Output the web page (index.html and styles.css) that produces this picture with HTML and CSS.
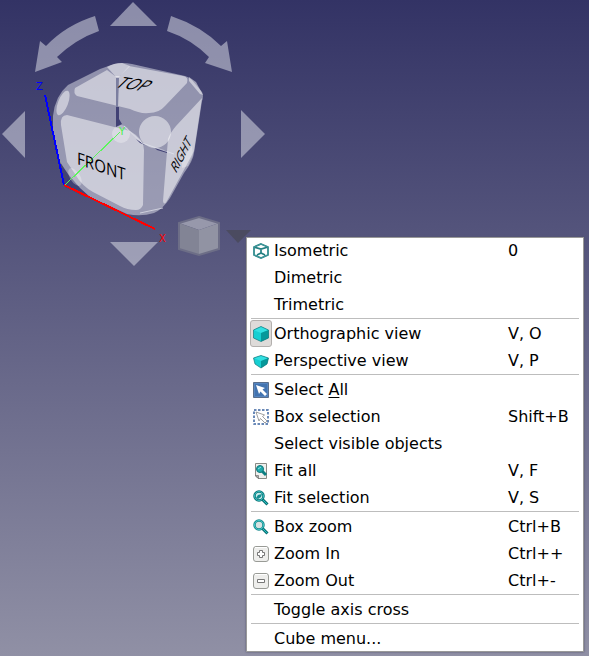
FILE: index.html
```html
<!DOCTYPE html>
<html lang="en">
<head>
<meta charset="utf-8">
<title>3D view</title>
<link rel="stylesheet" href="styles.css">
</head>
<body>
<main class="viewport">
  <svg class="navcube" width="272" height="272" viewBox="0 0 272 272" role="img" aria-label="Navigation cube">
    <g class="arrow">
      <path d="M133 2L157 26H110Z"/>
      <path d="M2 134L25 111V158Z"/>
      <path d="M265 134L241 110V158Z"/>
      <path d="M110 242H158L134 266Z"/>
      <path d="M95 16L99 31Q76 39 57 57L62 62L35 72L40 41L46 46Q66 25 95 16Z"/>
      <path d="M171 16L167 31Q191 39 209 57L205 63L232 72L227 41L221 46Q201 26 171 16Z"/>
    </g>
    <path class="body" d="M68 85L100 69Q111 65 114 64Q122 62 132 64L185 76Q189 77 192 80L202 92Q204 96 202 101L194 153Q193 161 184 173L170 198Q163 209 154 213Q141 217 127 214L90 197Q80 191 72 182L60 164L53 130V116Q55 96 68 85Z"/>
    <path class="gap" d="M60 162L68 174L80 188L90 197L84 196L65 187Z"/>
    <g class="face">
      <path d="M75 88L107 70L115 76H120L129 66L183 76Q189 77 187 83L165 106Q159 113 149 113Q140 114 130 109L77 96Q73 93 75 88Z"/>
      <path d="M67 115L130 131Q144 139 144 150L143 205Q141 210 136 210Q127 210 120 206L93 192Q82 186 75 174L67 162L61 125Q60 115 67 115Z"/>
      <path d="M202 98L194 151L185 168L168 199Q164 207 163 201L168 139Q170 133 176 126Z"/>
      <circle cx="155" cy="132" r="16"/>
      <ellipse cx="63" cy="103" rx="5" ry="13" transform="rotate(21 63 103)"/>
      <path d="M107 67Q114 63 122 63L130 66L119 77H116Z"/>
      <path d="M189 77L196 82L203 95L200 94L189 81Z"/>
      <path class="faint" d="M182 159L192 146L193 155L188 166L182 168Z"/>
      <ellipse class="faint" cx="75" cy="177" rx="5" ry="10" transform="rotate(-32 75 177)"/>
      <ellipse class="faint" cx="121" cy="134" rx="9" ry="9"/>
    </g>
    <path class="seam" d="M116 78H119L118 108H116Z"/>
    <path class="gap" d="M116 107H119V119L122 124L116 127V119Z"/>
    <path class="gap" d="M136 139L145 145L140 143ZM155 148L167 151V153L157 150Z"/>
    <path class="thread" d="M124 126L142 143L174 154M140 213L163 208"/>
    <path class="axis-y" d="M65 185L120 132"/>
    <path class="axis-z" d="M45 95L64 185"/>
    <path class="axis-x" d="M64 185L155 229"/>
    <text class="label-z" x="36" y="90">Z</text>
    <text class="label-y" x="119" y="135">Y</text>
    <text class="label-x" x="159" y="242">X</text>
    <text class="side front" transform="translate(77 164) rotate(19) skewX(19)">FRONT</text>
    <text class="side top" transform="translate(114 87) rotate(8) skewX(-38)">TOP</text>
    <text class="side right" transform="translate(176 174) rotate(-63) skewX(-30)">RIGHT</text>
    <g class="minicube">
      <path class="mini-top" d="M199 217L219 223L199 230L179 223Z"/>
      <path class="mini-left" d="M179 223L199 230V255L179 249Z"/>
      <path class="mini-right" d="M219 223L199 230V255L219 249Z"/>
      <path class="mini-edge" d="M199 217L219 223V249L199 255L179 249V223Z"/>
    </g>
    <path class="caret" d="M226 230H251L238 243Z"/>
  </svg>

  <div class="menu" role="menu">
    <button class="item" role="menuitem">
      <span class="icon"><svg width="16" height="16" viewBox="0 0 16 16"><path d="M8 1L15 4V12L8 15L1 12V4ZM1 4L8 6L15 4M8 6V10M4 12L8 10L12 12" fill="none" stroke="#237f82" stroke-width="1.700"/><path d="M8 1L15 4V12L8 15L1 12V4Z" fill="none" stroke="#4fa5a7" stroke-width=".7"/></svg></span>
      <span class="name">Isometric</span><span class="key">0</span>
    </button>
    <button class="item" role="menuitem"><span class="icon"></span><span class="name">Dimetric</span></button>
    <button class="item" role="menuitem"><span class="icon"></span><span class="name">Trimetric</span></button>
    <hr>
    <button class="item" role="menuitemradio" aria-checked="true">
      <span class="icon checked"><svg width="16" height="16" viewBox="0 0 16 16"><path d="M8 .5L15.500 4V12L8 15.500L.5 12V4Z" fill="#16cfd2"/><path d="M8 .5L15.500 4L8 7L.5 4Z" fill="#32e0e2"/><path d="M8 7L15.500 4V12L8 15.500Z" fill="#06989a"/><path d="M8 .5L15.500 4V12L8 15.500L.5 12V4Z" fill="none" stroke="#16777b" stroke-width=".7"/></svg></span>
      <span class="name">Orthographic view</span><span class="key">V, O</span>
    </button>
    <button class="item" role="menuitemradio" aria-checked="false">
      <span class="icon"><svg width="16" height="16" viewBox="0 0 16 16"><path d="M.5 5L8 2.500L15.500 5L14 11L8 15L2 11Z" fill="#16cfd2"/><path d="M.5 5L8 2.500L15.500 5L8 8Z" fill="#32e0e2"/><path d="M8 8L15.500 5L14 11L8 15Z" fill="#06989a"/><path d="M.5 5L8 2.500L15.500 5L14 11L8 15L2 11Z" fill="none" stroke="#16777b" stroke-width=".7"/></svg></span>
      <span class="name">Perspective view</span><span class="key">V, P</span>
    </button>
    <hr>
    <button class="item" role="menuitem">
      <span class="icon"><svg width="16" height="16" viewBox="0 0 16 16"><path d="M.5.5H15.500V15.500H.5Z" fill="#4374b0" stroke="#5a6f8c"/><path d="M1.500 1.500H14.500V14.500H1.500Z" fill="none" stroke="#5585c0"/><path d="M3 3L12 6L9.500 7.500L14 12L12 14L7.500 9.500L6 12Z" fill="#fff"/></svg></span>
      <span class="name">Select <u>A</u>ll</span>
    </button>
    <button class="item" role="menuitem">
      <span class="icon"><svg width="16" height="16" viewBox="0 0 16 16"><path d="M1 1H15V15H1Z" fill="none" stroke="#3a63a0" stroke-width="1.500" stroke-dasharray="2.500 1.500"/><path d="M3 3L11.500 6L9.500 7.500L14 12L12 14L7.500 9.500L6 12Z" fill="#fff" stroke="#888" stroke-width=".8"/></svg></span>
      <span class="name">Box selection</span><span class="key">Shift+B</span>
    </button>
    <button class="item" role="menuitem"><span class="icon"></span><span class="name">Select visible objects</span></button>
    <button class="item" role="menuitem">
      <span class="icon"><svg width="16" height="16" viewBox="0 0 16 16"><path d="M2.500.5H13.500V15.500H5L2.500 13Z" fill="#f0f0ee" stroke="#888a85"/><path d="M2.500 12.500L5.500 15.500V12.500Z" fill="#aaa" stroke="#666" stroke-width=".6"/><path d="M9 8L13 12" stroke="#0c7f82" stroke-width="3"/><circle cx="7" cy="6" r="3.500" fill="#1fa9ac" stroke="#11777a"/><path d="M5 6L8 4" stroke="#8be8e8"/></svg></span>
      <span class="name">Fit all</span><span class="key">V, F</span>
    </button>
    <button class="item" role="menuitem">
      <span class="icon"><svg width="16" height="16" viewBox="0 0 16 16"><path d="M9 9L14.500 14.500" stroke="#0b7174" stroke-width="3"/><path d="M9 9L14 14" stroke="#25c4c6"/><circle cx="6" cy="6" r="4.500" fill="#c9eeee" stroke="#0b7174" stroke-width="2.500"/><circle cx="6" cy="6" r="4.500" fill="none" stroke="#36bfc1"/><path d="M3 8L5 5L9 4L8 7L5 9Z" fill="#168c90"/></svg></span>
      <span class="name">Fit selection</span><span class="key">V, S</span>
    </button>
    <hr>
    <button class="item" role="menuitem">
      <span class="icon"><svg width="16" height="16" viewBox="0 0 16 16"><path d="M9 9L14.500 14.500" stroke="#0b7174" stroke-width="3"/><path d="M9 9L14 14" stroke="#25c4c6"/><circle cx="6" cy="6" r="4.500" fill="#d8e3e3" stroke="#16898c" stroke-width="2.500"/><circle cx="6" cy="6" r="4.500" fill="none" stroke="#45c8ca"/></svg></span>
      <span class="name">Box zoom</span><span class="key">Ctrl+B</span>
    </button>
    <button class="item" role="menuitem">
      <span class="icon"><svg width="16" height="16" viewBox="0 0 16 16"><rect x=".5" y=".5" width="15" height="15" rx="2.500" fill="#eeeeec" stroke="#999b96"/><path d="M2 1.500H14" stroke="#fff"/><path d="M6.500 4.500H9.500V6.500H11.500V9.500H9.500V11.500H6.500V9.500H4.500V6.500H6.500Z" fill="#fff" stroke="#777"/></svg></span>
      <span class="name">Zoom In</span><span class="key">Ctrl++</span>
    </button>
    <button class="item" role="menuitem">
      <span class="icon"><svg width="16" height="16" viewBox="0 0 16 16"><rect x=".5" y=".5" width="15" height="15" rx="2.500" fill="#eeeeec" stroke="#999b96"/><path d="M2 1.500H14" stroke="#fff"/><path d="M4.500 6.500H11.500V9.500H4.500Z" fill="#fff" stroke="#777"/></svg></span>
      <span class="name">Zoom Out</span><span class="key">Ctrl+-</span>
    </button>
    <hr>
    <button class="item" role="menuitem"><span class="icon"></span><span class="name">Toggle axis cross</span></button>
    <hr>
    <button class="item" role="menuitem"><span class="icon"></span><span class="name">Cube menu...</span></button>
  </div>
</main>
</body>
</html>
```
FILE: styles.css
```css
* { box-sizing: border-box; }

body {
  margin: 0;
  font-family: "DejaVu Sans", sans-serif;
  font-size: 16px;
  color: #000;
}

.viewport {
  position: relative;
  min-height: 100vh;
  background: linear-gradient(#333365, #9090a5);
}

.navcube { display: block; }

.arrow, .body { fill: #e4e6ee; fill-opacity: .5; }
.face { fill: #fff; fill-opacity: .49; }
.faint { fill-opacity: .3; }
.seam { fill: #7c7fa0; }
.gap { fill: #414174; }
.thread { fill: none; stroke: #e4e6ee; stroke-opacity: .7; }

.axis-x, .axis-y, .axis-z { stroke-width: 2; shape-rendering: crispEdges; }
.axis-x { stroke: #f00; }
.axis-y { stroke: #5cf55c; stroke-width: 1; }
.axis-z { stroke: #00f; }
.label-x, .label-y, .label-z { font-size: 10px; }
.label-x { fill: #f00; }
.label-y { fill: #4cf04c; }
.label-z { fill: #00f; }

.side { font-family: "Open Sans", sans-serif; fill: #000; }
.front { font-size: 16px; }
.top { font-size: 16px; }
.right { font-size: 12px; }

.mini-top { fill: #9798ab; }
.mini-left { fill: #828495; }
.mini-right { fill: #9193a3; }
.mini-edge { fill: none; stroke: #6d6e87; stroke-width: 2; }
.caret { fill: #4b4b60; }

.menu {
  position: absolute;
  top: 237px;
  right: 5px;
  width: 338px;
  background: #fff;
  box-shadow: inset 0 0 0 1px #999, 0 0 2px #55556e;
}

.item {
  display: grid;
  grid-template-columns: 22px 1fr 72px;
  column-gap: 2px;
  align-items: center;
  width: 100%;
  height: 27px;
  padding: 0 4px;
  border: 0;
  background: none;
  font: inherit;
  color: inherit;
  text-align: left;
}

.name, .key { white-space: nowrap; }

.icon {
  display: flex;
  align-items: center;
  justify-content: center;
  height: 27px;
}

.checked {
  border: 1px solid #b3b0ae;
  border-radius: 3px;
  background: #dedbd9;
}

u { text-underline-offset: 2px; }

hr {
  height: 2px;
  margin: 0 5px;
  border: 0;
  border-top: 1px solid #bdbdbd;
}
```
